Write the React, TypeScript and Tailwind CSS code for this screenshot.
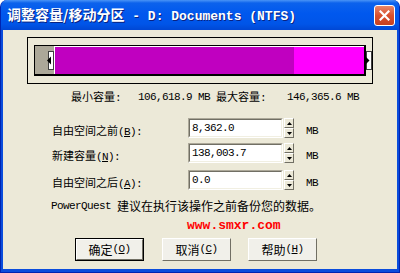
import React from 'react'

const cjk = "font-['Noto_Sans_CJK_SC',sans-serif]"
const mono = "font-['Liberation_Mono','Noto_Sans_CJK_SC',monospace] text-[11px] tracking-[-0.6px]"

function Key({ k }: { k: string }) {
  return (
    <span className={mono}>
      (<span className="underline underline-offset-1">{k}</span>)
    </span>
  )
}

function Spinner() {
  return (
    <div className="ml-[1px] flex h-[20px] w-[10px] flex-col">
      {['up', 'down'].map((d) => (
        <div
          key={d}
          className="flex h-[10px] w-[10px] items-center justify-center border-t border-l border-white border-r border-b border-r-[#716F64] border-b-[#716F64] bg-[#ECE9D8]"
        >
          <svg width="5" height="3" viewBox="0 0 5 3">
            {d === 'up' ? <path d="M2.5 0 L5 3 L0 3 Z" fill="#000" /> : <path d="M0 0 L5 0 L2.5 3 Z" fill="#000" />}
          </svg>
        </div>
      ))}
    </div>
  )
}

function Field({ label, k, value, className }: { label: string; k: string; value: string; className: string }) {
  return (
    <div className={`flex h-[20px] items-center ${className}`}>
      <div className={`ml-[49px] mt-[6px] w-[136px] text-[11px] ${cjk}`}>
        {label}
        <Key k={k} />
        <span className={mono}>:</span>
      </div>
      <div className="h-[20px] w-[95px] border border-t-[#ACA899] border-l-[#ACA899] border-r-white border-b-white">
        <div className="flex h-full w-full items-center border-t border-l border-[#716F64] border-r border-b border-r-[#F1EFE2] border-b-[#F1EFE2] bg-white pl-[2px]">
          <span className="font-['Liberation_Mono',monospace] text-[11px] tracking-[-0.6px] text-black">{value}</span>
        </div>
      </div>
      <Spinner />
      <span className={`ml-[12px] mt-[6px] ${mono}`}>MB</span>
    </div>
  )
}

function Button({ label, k, primary, className }: { label: string; k: string; primary?: boolean; className: string }) {
  return (
    <div className={`h-[23px] w-[69px] ${primary ? 'border border-black' : ''} ${className}`}>
      <div className="flex h-full w-full items-center justify-center border-t border-l border-white border-r border-b border-r-[#716F64] border-b-[#716F64] bg-[#F1F0EA]">
        <span className={`text-[12px] ${cjk}`}>{label}</span>
        <Key k={k} />
      </div>
    </div>
  )
}

export default function App() {
  return (
    <div className="h-[273px] w-[400px] bg-white text-black">
      <div className="flex h-full w-full flex-col overflow-hidden rounded-t-[7px] border-x border-b border-[#0024B0] bg-[#0A4CDC]">
        {/* Title bar */}
        <div className="flex h-[30px] items-center pl-[6px] pr-[4px] bg-[linear-gradient(180deg,#4A94F6_0%,#0C62EC_10%,#0058EE_45%,#0055E8_80%,#0047D4_100%)]">
          <div className="flex items-baseline font-bold text-white [text-shadow:1px_1px_0_#0A2280]">
            <span className={`text-[14px] ${cjk}`}>调整容量/移动分区</span>
            <span className="whitespace-pre font-['Liberation_Mono',monospace] text-[13px]"> - D: Documents (NTFS)</span>
          </div>
          <div className="ml-auto flex h-[21px] w-[21px] items-center justify-center rounded-[3px] border border-white bg-[linear-gradient(180deg,#E7876A_0%,#D9502E_50%,#C7401F_100%)]">
            <svg width="11" height="11" viewBox="0 0 11 11">
              <path d="M1.5 1.5 L9.5 9.5 M9.5 1.5 L1.5 9.5" stroke="#fff" strokeWidth="2.2" strokeLinecap="square" />
            </svg>
          </div>
        </div>

        {/* Client area */}
        <div className="mx-[2px] mb-[3px] flex flex-1 flex-col bg-[#ECE9D8]">
          <div className="ml-[24px] mt-[7px] h-[47px] w-[346px] border border-black pl-[6px] pt-[7px]">
            <div className="relative flex h-[31px] w-[332px] border-t border-l border-r-2 border-b-2 border-black">
              <div className="w-[19px] bg-[#ACA899]" />
              <div className="flex flex-1 border-t border-l border-white">
                <div className="flex-1 bg-[#C000C0]" />
                <div className="w-[70px] bg-[#FF00FF]" />
              </div>
              <svg className="absolute left-[12px] top-[5px]" width="7" height="19" viewBox="0 0 7 19">
                <rect x="1.5" y="0.5" width="5" height="18" fill="#fff" stroke="#404040" />
                <path d="M0 9.5 L4 5.5 L4 13.5 Z" fill="#000" />
              </svg>
              <svg className="absolute left-[331px] top-[5px]" width="6" height="19" viewBox="0 0 6 19">
                <rect x="0.5" y="0.5" width="5" height="18" fill="#fff" stroke="#404040" />
                <path d="M0 6 L3.5 9.5 L0 13 Z" fill="#000" />
              </svg>
            </div>
          </div>

          <div className="ml-[68px] mt-[7px] flex h-[12px] items-center">
            <span className={`w-[67px] text-[11px] ${cjk}`}>
              最小容量<span className={mono}>:</span>
            </span>
            <span className={`w-[78px] ${mono}`}>106,618.9 MB</span>
            <span className={`w-[71px] text-[11px] ${cjk}`}>
              最大容量<span className={mono}>:</span>
            </span>
            <span className={mono}>146,365.6 MB</span>
          </div>

          <Field className="mt-[15px]" label="自由空间之前" k="B" value="8,362.0" />
          <Field className="mt-[5px]" label="新建容量" k="N" value="138,003.7" />
          <Field className="mt-[7px]" label="自由空间之后" k="A" value="0.0" />

          <div className="ml-[48px] mt-[9px] flex h-[14px] items-center">
            <span className={mono}>PowerQuest</span>
            <span className={`ml-[6px] text-[12px] ${cjk}`}>建议在执行该操作之前备份您的数据。</span>
          </div>

          <div className="ml-[184px] mt-[6px] flex h-[14px] items-center">
            <span className="font-['Liberation_Mono',monospace] text-[13px] font-bold text-[#FF0000]">www.smxr.com</span>
          </div>

          <div className="ml-[72px] mt-[5px] flex">
            <Button label="确定" k="O" primary className="" />
            <Button label="取消" k="C" className="ml-[18px]" />
            <Button label="帮助" k="H" className="ml-[17px]" />
          </div>
        </div>
      </div>
    </div>
  )
}
